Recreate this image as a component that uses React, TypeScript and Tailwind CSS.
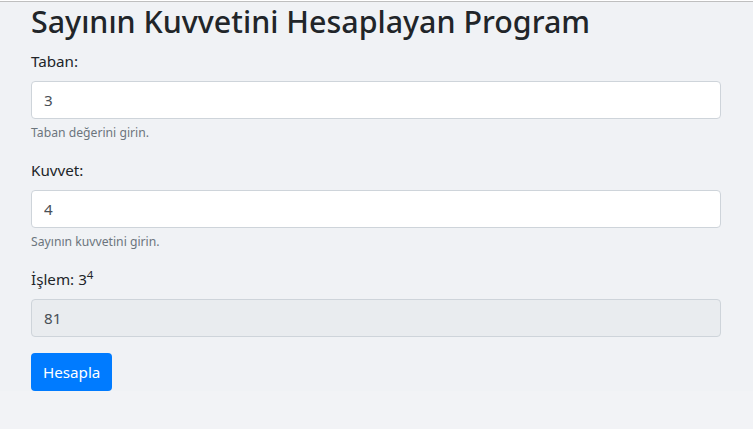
export default function App() {
  const font = { fontFamily: '"Noto Sans", "Open Sans", sans-serif' };
  return (
    <div className="min-h-[429px] bg-[#f2f3f6] text-[#212529]" style={font}>
      <div className="h-px bg-white" />
      <div className="h-px bg-[#bfbfbf]" />
      <div className="bg-[#f0f2f5] pl-[31px] pr-[32px] pt-px">
        <h1 className="mb-2 text-[30.4px] font-medium leading-[38px]">
          Sayının Kuvvetini Hesaplayan Program
        </h1>

        <div className="mb-4">
          <label className="mb-2 block text-[15.2px] leading-6">Taban:</label>
          <input
            defaultValue="3"
            className="block h-[38px] w-full rounded border border-[#ced4da] bg-white px-3 text-[15.2px] text-[#495057] outline-none"
          />
          <small className="mt-1 block text-[12.2px] leading-[19px] text-[#6c757d]">
            Taban değerini girin.
          </small>
        </div>

        <div className="mb-4">
          <label className="mb-2 block text-[15.2px] leading-6">Kuvvet:</label>
          <input
            defaultValue="4"
            className="block h-[38px] w-full rounded border border-[#ced4da] bg-white px-3 text-[15.2px] text-[#495057] outline-none"
          />
          <small className="mt-1 block text-[12.2px] leading-[19px] text-[#6c757d]">
            Sayının kuvvetini girin.
          </small>
        </div>

        <div className="mb-4">
          <label className="mb-2 block text-[15.2px] leading-6">
            İşlem: 3<sup className="text-[11.5px]">4</sup>
          </label>
          <input
            readOnly
            value="81"
            className="block h-[38px] w-full rounded border border-[#ced4da] bg-[#e9ecef] px-3 text-[15.2px] text-[#495057] outline-none"
          />
        </div>

        <button className="h-[38px] rounded bg-[#007bff] px-3 text-[15.2px] text-white">
          Hesapla
        </button>
      </div>
    </div>
  );
}
